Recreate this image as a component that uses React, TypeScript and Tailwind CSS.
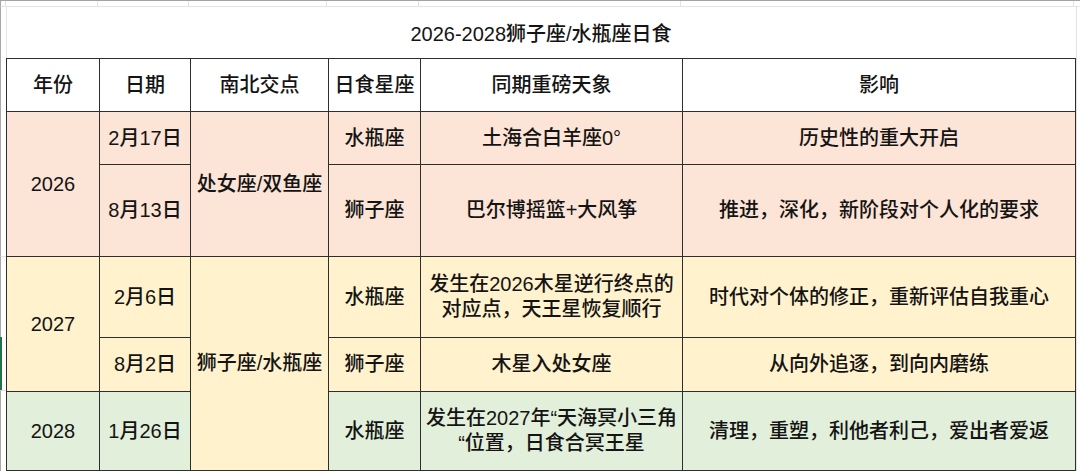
import type { ReactNode } from 'react';

// 2026-2028 狮子座/水瓶座日食 — 电子表格截图复刻

const cols = [93, 91, 138, 92, 262, 393];

const pink = 'bg-[#fce4d6]';
const yellow = 'bg-[#fff2cc]';
const green = 'bg-[#e2efda]';

function Cell({
  children,
  bg = '',
  rowSpan,
  h,
}: {
  children: ReactNode;
  bg?: string;
  rowSpan?: number;
  h?: string;
}) {
  return (
    <td
      rowSpan={rowSpan}
      className={`border border-[#2e2e2e] p-0 text-center align-middle leading-[25px] ${bg} ${h ?? ''}`}
    >
      {children}
    </td>
  );
}

export default function App() {
  return (
    <div className="flex h-[471px] w-[1080px] flex-col overflow-hidden border-t border-[#a3a3a3] bg-white font-['Liberation_Sans','Noto_Sans_CJK_SC',sans-serif] text-[20px] font-medium text-[#141414]">
      {/* 表格上方的空白网格行 */}
      <div className="flex h-[6px] shrink-0">
        <div className="w-[6px] shrink-0 border-b border-l border-r border-b-[#e3e3e3] border-l-[#a8a8a8] border-r-[#e3e3e3]" />
        {cols.map((w, i) => (
          <div
            key={i}
            style={{ width: i === 0 ? w - 1 : w }}
            className="shrink-0 border-b border-r border-[#e3e3e3]"
          />
        ))}
        <div className="flex-1 border-b border-[#e3e3e3]" />
      </div>

      <div className="flex flex-1">
        {/* 行号侧边 */}
        <div className="flex w-[6px] shrink-0 flex-col">
          <div className="h-[249px] border-l border-[#a8a8a8]" />
          <div className="h-[81px] border-l border-t border-[#a8a8a8] border-t-[#e3e3e3]" />
          <div className="h-[53px] border-l-2 border-[#217346]" />
          <div className="flex-1 border-l border-t border-[#a8a8a8] border-t-[#e3e3e3]" />
        </div>

        <div className="flex w-[1069px] shrink-0 flex-col">
          <div className="flex h-[51px] items-center justify-center border-l border-[#e3e3e3] pt-[3px] text-[20px]">
            2026-2028狮子座/水瓶座日食
          </div>

          <table className="w-[1069px] table-fixed border-collapse">
            <colgroup>
              {cols.map((w, i) => (
                <col key={i} style={{ width: w }} />
              ))}
            </colgroup>
            <tbody>
              <tr>
                <Cell h="h-[53px]">年份</Cell>
                <Cell>日期</Cell>
                <Cell>南北交点</Cell>
                <Cell>日食星座</Cell>
                <Cell>同期重磅天象</Cell>
                <Cell>影响</Cell>
              </tr>
              <tr>
                <Cell bg={pink} rowSpan={2}>2026</Cell>
                <Cell bg={pink} h="h-[53px]">2月17日</Cell>
                <Cell bg={pink} rowSpan={2}>处女座/双鱼座</Cell>
                <Cell bg={pink}>水瓶座</Cell>
                <Cell bg={pink}>土海合白羊座0°</Cell>
                <Cell bg={pink}>历史性的重大开启</Cell>
              </tr>
              <tr>
                <Cell bg={pink} h="h-[92px]">8月13日</Cell>
                <Cell bg={pink}>狮子座</Cell>
                <Cell bg={pink}>巴尔博摇篮+大风筝</Cell>
                <Cell bg={pink}>推进，深化，新阶段对个人化的要求</Cell>
              </tr>
              <tr>
                <Cell bg={yellow} rowSpan={2}>2027</Cell>
                <Cell bg={yellow} h="h-[81px]">2月6日</Cell>
                <Cell bg={yellow} rowSpan={3}>狮子座/水瓶座</Cell>
                <Cell bg={yellow}>水瓶座</Cell>
                <Cell bg={yellow}>
                  发生在2026木星逆行终点的
                  <br />
                  对应点，天王星恢复顺行
                </Cell>
                <Cell bg={yellow}>时代对个体的修正，重新评估自我重心</Cell>
              </tr>
              <tr>
                <Cell bg={yellow} h="h-[54px]">8月2日</Cell>
                <Cell bg={yellow}>狮子座</Cell>
                <Cell bg={yellow}>木星入处女座</Cell>
                <Cell bg={yellow}>从向外追逐，到向内磨练</Cell>
              </tr>
              <tr>
                <Cell bg={green} h="h-[79px]">2028</Cell>
                <Cell bg={green}>1月26日</Cell>
                <Cell bg={green}>水瓶座</Cell>
                <Cell bg={green}>
                  发生在2027年“天海冥小三角
                  <br />
                  “位置，日食合冥王星
                </Cell>
                <Cell bg={green}>清理，重塑，利他者利己，爱出者爱返</Cell>
              </tr>
            </tbody>
          </table>
        </div>

        {/* 右侧空白网格 */}
        <div className="flex-1 pl-[1px]">
          <div className="h-full w-[1px] bg-[#e3e3e3]" />
        </div>
      </div>
    </div>
  );
}
